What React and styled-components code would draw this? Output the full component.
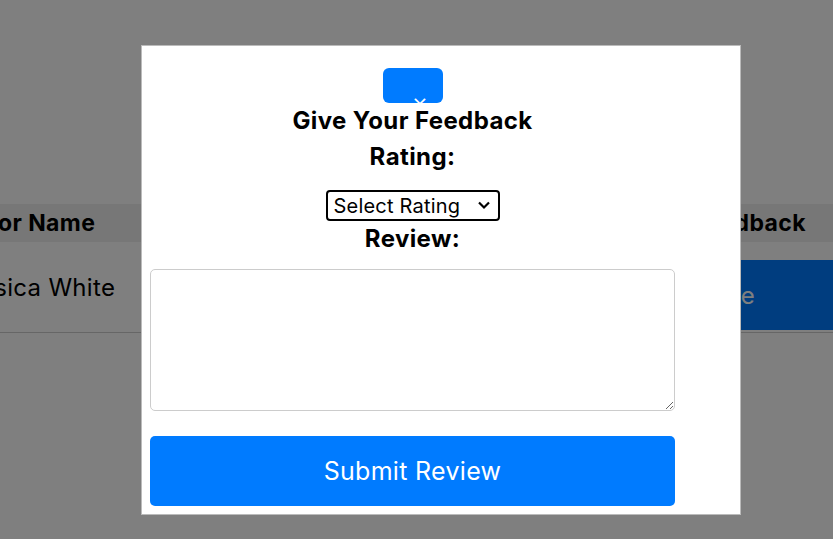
import styled, { createGlobalStyle } from "styled-components";

const GlobalStyle = createGlobalStyle`
  body {
    margin: 0;
    overflow: hidden;
    font-family: "Inter", "Noto Sans", sans-serif;
  }
`;

const Page = styled.div`
  height: 539px;
  background: #ffffff;
  padding-top: 204px;
  box-sizing: border-box;
`;

const Table = styled.div`
  width: 100%;
`;

const HeadRow = styled.div`
  display: flex;
  justify-content: space-between;
  align-items: center;
  height: 38px;
  background: #eeeeee;
  padding-right: 27px;
`;

const HeadCell = styled.div`
  font-size: 23px;
  font-weight: 700;
  letter-spacing: 0.4px;
  color: #000;
  margin-left: ${(p) => p.$shift || 0}px;
  white-space: nowrap;
`;

const BodyRow = styled.div`
  display: flex;
  justify-content: space-between;
  align-items: center;
  height: 90px;
  border-bottom: 1px solid #cccccc;
`;

const BodyCell = styled.div`
  font-size: 24px;
  letter-spacing: 0.3px;
  color: #000;
  margin-left: -47px;
  white-space: nowrap;
`;

const FeedbackButton = styled.button`
  align-self: flex-end;
  width: 150px;
  height: 70px;
  margin-bottom: 2px;
  border: none;
  background: #007bff;
  color: #fff;
  font-family: inherit;
  font-size: 24px;
  text-align: left;
  padding: 0 0 0 21px;
  white-space: nowrap;
`;

const Overlay = styled.div`
  position: fixed;
  inset: 0;
  background: rgba(0, 0, 0, 0.5);
  display: flex;
  align-items: flex-start;
  padding: 45px 0 0 141px;
`;

const Modal = styled.div`
  width: 600px;
  height: 470px;
  box-sizing: border-box;
  background: #fff;
  border: 1px solid #bbbbbb;
  padding: 22px 8px 0;
`;

const Form = styled.div`
  width: 525px;
  display: flex;
  flex-direction: column;
  align-items: center;
`;

const CloseButton = styled.button`
  width: 60px;
  height: 35px;
  border: none;
  border-radius: 6px;
  background: #007bff;
  color: #fff;
  overflow: hidden;
  padding: 25px 0 0 15px;
  font-size: 20px;
  line-height: 20px;
  font-family: "DejaVu Sans", sans-serif;
`;

const Heading = styled.div`
  font-size: 24px;
  font-weight: 700;
  letter-spacing: 0.4px;
  line-height: 36px;
  color: #000;
`;

const SelectWrap = styled.div`
  position: relative;
  margin-top: 15px;
  display: flex;
`;

const Select = styled.select`
  appearance: none;
  height: 31px;
  width: 174px;
  padding: 0 30px 0 6px;
  border: 2px solid #000;
  border-radius: 4px;
  background: #fff;
  color: #000;
  font-family: inherit;
  font-size: 20px;
  letter-spacing: 0.2px;
  outline: none;
`;

const Chevron = styled.svg`
  position: absolute;
  right: 9px;
  top: 10px;
  width: 14px;
  height: 10px;
  pointer-events: none;
`;

const TextArea = styled.textarea`
  display: block;
  margin-top: 12px;
  width: 525px;
  height: 142px;
  box-sizing: border-box;
  border: 1px solid #cccccc;
  border-radius: 5px;
  resize: vertical;
`;

const Submit = styled.button`
  margin-top: 25px;
  width: 525px;
  height: 70px;
  border: none;
  border-radius: 5px;
  background: #007bff;
  color: #fff;
  font-family: inherit;
  font-size: 25px;
  letter-spacing: 0.3px;
`;

export default function App() {
  return (
    <>
      <GlobalStyle />
      <Page>
        <Table>
          <HeadRow>
            <HeadCell $shift={-56}>Doctor Name</HeadCell>
            <HeadCell>Feedback</HeadCell>
          </HeadRow>
          <BodyRow>
            <BodyCell>Jessica White</BodyCell>
            <FeedbackButton>Give</FeedbackButton>
          </BodyRow>
        </Table>
      </Page>
      <Overlay>
        <Modal>
          <Form>
            <CloseButton>×</CloseButton>
            <Heading>Give Your Feedback</Heading>
            <Heading>Rating:</Heading>
            <SelectWrap>
              <Select defaultValue="">
                <option value="">Select Rating</option>
                <option value="1">1</option>
                <option value="2">2</option>
                <option value="3">3</option>
                <option value="4">4</option>
                <option value="5">5</option>
              </Select>
              <Chevron viewBox="0 0 14 10">
                <path d="M2 2.5 L7 7.5 L12 2.5" fill="none" stroke="#000" strokeWidth="2.2" />
              </Chevron>
            </SelectWrap>
            <Heading>Review:</Heading>
            <TextArea />
            <Submit>Submit Review</Submit>
          </Form>
        </Modal>
      </Overlay>
    </>
  );
}
